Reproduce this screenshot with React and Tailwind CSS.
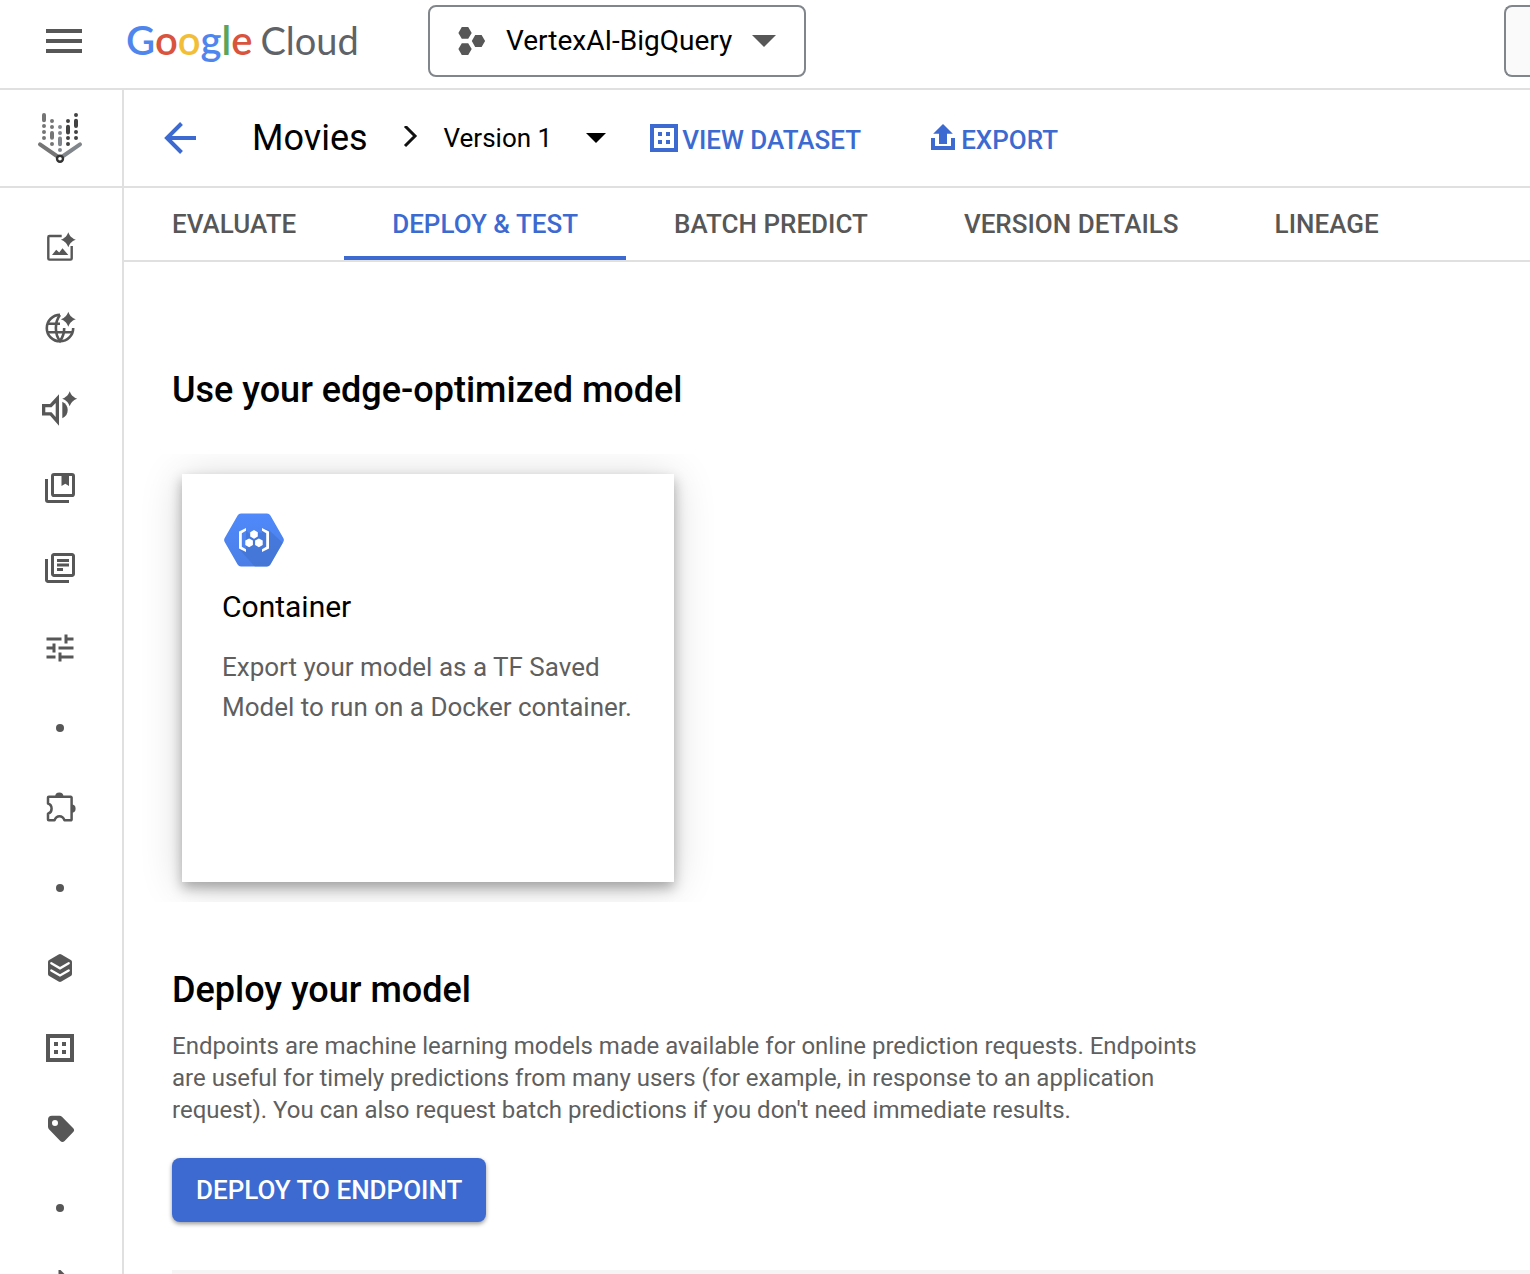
import { MdOutlineLibraryBooks, MdTune } from "react-icons/md";

function Sparkle({ x, y, r = 7 }) {
  return (
    <path
      transform={`translate(${x} ${y}) scale(${r / 7})`}
      fill="currentColor"
      d="M0-7.5C.9-4.700 2.200-3.200 3.600-2.200C4.500-1.300 5.500-.7 7.500 0C5.500.7 4.500 1.300 3.600 2.200C2.200 3.200.9 4.700 0 7.500C-.9 4.700-2.200 3.200-3.600 2.200C-4.500 1.300-5.500.7-7.500 0C-5.500-.7-4.500-1.300-3.600-2.200C-2.200-3.200-.9-4.700 0-7.500z"
    />
  );
}

function Icon({ children }) {
  return (
    <svg width="48" height="48" viewBox="0 0 48 48" fill="none" aria-hidden="true">
      {children}
    </svg>
  );
}

function VisionIcon() {
  return (
    <Icon>
      <path d="M25.700 12H13.500a1.200 1.200 0 0 0-1.200 1.200V34.400a1.200 1.200 0 0 0 1.200 1.200H34.500a1.200 1.200 0 0 0 1.200-1.200V22" stroke="currentColor" strokeWidth="2.400" />
      <path d="M16 31l4.200-5.300 3 2.900 3.300-4.300L32.300 31z" fill="currentColor" />
      <Sparkle x={32.3} y={15.7} />
    </Icon>
  );
}

function GlobeIcon() {
  return (
    <Icon>
      <g stroke="currentColor" strokeWidth="2.600">
        <path d="M24 10.900A13.200 13.200 0 1 0 37.200 24" />
        <path d="M11.500 19.800H24M11.500 28.200H36.500" />
        <path d="M24 11C18.500 18 18.500 30 24 37C27 33 28.300 29 28.200 24" />
      </g>
      <Sparkle x={32.3} y={15.3} />
    </Icon>
  );
}

function SpeechIcon() {
  return (
    <Icon>
      <path fillRule="evenodd" fill="currentColor" d="M6 20H14L23 10.300V41.700L14 31.500H6zM9.300 23.300V28.200H15.500L19.700 33V19L15.500 23.300z" />
      <path fill="currentColor" d="M26.300 17.700c3.600 1.500 5.400 4.800 5.400 8.300s-1.800 6.800-5.400 8.300z" />
      <Sparkle x={33.7} y={14.7} />
    </Icon>
  );
}

function CollectionIcon() {
  return (
    <Icon>
      <rect x="16.500" y="10.500" width="21" height="21" rx="1.600" stroke="currentColor" strokeWidth="3" />
      <path d="M25.500 10.500H33V22L29.300 19.800L25.500 22z" fill="currentColor" />
      <path d="M10.500 15V36a1.500 1.500 0 0 0 1.500 1.500H33" stroke="currentColor" strokeWidth="3" />
    </Icon>
  );
}

function PuzzleIcon() {
  return (
    <Icon>
      <path
        d="M12.800 12.800H34.800a.8.800 0 0 1 .8.800V35.500a.8.800 0 0 1-.8.800H28.500C27.500 33.700 25.500 32.300 23.500 32.300S19.500 33.700 18.500 36.300H12.800a.8.800 0 0 1-.8-.8V29.800C14.300 29 15.600 27 15.600 24.700S14.300 20.300 12 19.500V13.600a.8.800 0 0 1 .8-.8z"
        stroke="currentColor"
        strokeWidth="2.500"
        strokeLinejoin="round"
      />
      <path fill="currentColor" d="M19.200 12.500a4.100 4.100 0 0 1 8.200 0zM35.500 20.600a4.100 4.100 0 0 1 0 8.200z" />
    </Icon>
  );
}

function LayersIcon() {
  return (
    <Icon>
      <path fill="currentColor" d="M22.600 10.500a2.800 2.800 0 0 1 2.800 0L34.800 16a2.400 2.400 0 0 1 1.200 2.100V30a2.400 2.400 0 0 1-1.200 2.100L25.400 37.600a2.800 2.800 0 0 1-2.800 0L13.200 32.100A2.400 2.400 0 0 1 12 30V18.100A2.400 2.400 0 0 1 13.200 16z" />
      <path d="M15.300 19.200L24 24.300L32.700 19.200M15.300 26.400L24 31.500L32.700 26.400" stroke="#fff" strokeWidth="2.300" strokeLinecap="round" />
    </Icon>
  );
}

function DatasetGlyph() {
  return (
    <svg width="28" height="28" viewBox="0 0 28 28" fill="currentColor" aria-hidden="true">
      <path fillRule="evenodd" d="M0 0H28V28H0zM4 4V24H24V4z" />
      <path d="M8 8h4v4H8zM16 8h4v4h-4zM8 16h4v4H8zM16 16h4v4h-4z" />
    </svg>
  );
}

function TagIcon() {
  return (
    <Icon>
      <path fillRule="evenodd" fill="currentColor" d="M16 11.700H23.300a4 4 0 0 1 2.900 1.200L37 23.900a3 3 0 0 1 0 4.300L28.600 36.900a3 3 0 0 1-4.300 0L13.200 25.500A4 4 0 0 1 12 22.700V15.700a4 4 0 0 1 4-4zM19 16a3 3 0 1 0 0 6a3 3 0 1 0 0-6z" />
    </Icon>
  );
}

function Dot() {
  return <span className="size-2 rounded-full bg-[#575757]" />;
}

function RocketIcon() {
  return (
    <Icon>
      <path fill="currentColor" d="M24.500 6L29 10.500V20H38L34 30H29V40H19V30H14L10 20H22.500V6z" />
    </Icon>
  );
}

function VertexLogo() {
  return (
    <svg width="48" height="56" viewBox="0 0 48 56" fill="none" strokeWidth="4" strokeLinecap="round" aria-hidden="true">
      <path stroke="#757575" d="M8 5V10.300M8 16v.01M8 22v.01M8 28v.01M16 11v.01M16 17v.01M16 23V27.700M16 34v.01" />
      <path stroke="#80868b" d="M24 17v.01M24 23v.01M24 28.500V34.200M24 40v.01" />
      <path stroke="#424242" d="M32 11v.01M32 16.700V22.500M32 28v.01M32 34v.01M40 5v.01M40 10.700V16M40 22v.01M40 28v.01" />
      <path stroke="#757575" d="M4 34.300L23 47.500" />
      <path stroke="#80868b" d="M44 34.300L25 47.500" />
      <circle cx="24" cy="48.700" r="3" fill="#fff" stroke="#333" strokeWidth="2.400" />
    </svg>
  );
}

function ContainerLogo() {
  return (
    <svg className="block" width="60" height="54" viewBox="0 0 60 54" aria-hidden="true">
      <defs>
        <linearGradient id="hexFill" x1="0" y1="0" x2="0" y2="1">
          <stop offset="0" stopColor="#4f89fb" />
          <stop offset="1" stopColor="#4b7fe6" />
        </linearGradient>
        <clipPath id="hexClip">
          <path d="M17 .5H43a4 4 0 0 1 3.400 2L59.300 25a4 4 0 0 1 0 4L46.400 51.500a4 4 0 0 1-3.400 2H17a4 4 0 0 1-3.400-2L.7 29a4 4 0 0 1 0-4L13.600 2.500A4 4 0 0 1 17 .5z" />
        </clipPath>
      </defs>
      <g clipPath="url(#hexClip)">
        <rect width="60" height="54" fill="url(#hexFill)" />
        <path d="M15 36L33 56H60V31L45 17L38 15V20L33.500 19L29 25L22 17V36z" fill="#3f6fc9" opacity=".55" />
      </g>
      <path fill="#fff" d="M22 15V17.800L17.800 20.300V33.700L22 36.200V39L15 35.500V18.500zM38 15V17.800L42.200 20.300V33.700L38 36.200V39L45 35.500V18.500z" />
      <path fill="#fff" d="M30 17l3.800 2.200v4.400L30 25.800l-3.800-2.200v-4.400zM25.100 25.400l3.800 2.200V32l-3.800 2.200L21.300 32v-4.400zM34.900 25.400l3.800 2.200V32l-3.800 2.200L31.100 32v-4.400z" />
    </svg>
  );
}

const navItems = [
  ["Vision", <VisionIcon />],
  ["Language", <GlobeIcon />],
  ["Speech", <SpeechIcon />],
  ["Model Garden", <CollectionIcon />],
  ["Notebooks", <MdOutlineLibraryBooks size={36} />],
  ["Tuning", <MdTune size={36} />],
  ["Section one", <Dot />],
  ["Extensions", <PuzzleIcon />],
  ["Section two", <Dot />],
  ["Feature Store", <LayersIcon />],
  ["Datasets", <DatasetGlyph />],
  ["Labeling", <TagIcon />],
  ["Section three", <Dot />],
  ["Training", <RocketIcon />],
];

const tabs = ["EVALUATE", "DEPLOY & TEST", "BATCH PREDICT", "VERSION DETAILS", "LINEAGE"];

function TopBar() {
  return (
    <header className="flex h-[90px] shrink-0 items-start border-b-2 border-[#e0e0e0]">
      <button type="button" aria-label="Main menu" className="mt-[29px] ml-[46px] flex w-9 flex-col gap-1.5">
        <span className="h-1 w-full bg-[#575757]" />
        <span className="h-1 w-full bg-[#575757]" />
        <span className="h-1 w-full bg-[#575757]" />
      </button>
      <a href="#" className="ml-11 mt-4 flex w-[258px] items-baseline gap-2 whitespace-nowrap font-['Lato',sans-serif] leading-[48px]">
        <span className="text-[40px] font-semibold">
          <span className="text-[#4f86ee]">G</span>
          <span className="text-[#d9543d]">o</span>
          <span className="text-[#f2be3a]">o</span>
          <span className="text-[#4f86ee]">g</span>
          <span className="text-[#5aa55c]">l</span>
          <span className="text-[#d9543d]">e</span>
        </span>
        <span className="text-[38px] text-[#5f6368]">Cloud</span>
      </a>
      <button type="button" className="ml-11 mt-[5px] flex h-[72px] items-center rounded-lg border-2 border-[#80868b] px-7 text-[28px]">
        <svg width="28" height="28" viewBox="0 0 28 28" fill="#575757" aria-hidden="true">
          <path d="M3.800 0h6.400l3.500 5.900-3.500 5.900H3.800L.4 5.900zM3.800 16.200h6.400l3.500 5.900-3.500 5.900H3.800L.4 22.100zM17.200 8.100h6.400l3.500 5.900-3.500 5.900h-6.400L13.800 14z" />
        </svg>
        <span className="ml-5">VertexAI-BigQuery</span>
        <svg className="ml-5" width="24" height="12" viewBox="0 0 24 12" fill="#575757" aria-hidden="true">
          <path d="M0 0H24L12 12z" />
        </svg>
      </button>
      <button type="button" aria-label="Search" className="mt-[5px] ml-auto h-[72px] w-[26px] rounded-l-lg border-2 border-r-0 border-[#80868b] bg-[#fafafa]" />
    </header>
  );
}

function SideBar() {
  return (
    <aside className="w-[124px] shrink-0 border-r-2 border-[#e0e0e0] text-[#575757]">
      <div className="flex h-[98px] items-center border-b-2 border-[#e0e0e0] pl-9">
        <VertexLogo />
      </div>
      <nav aria-label="Vertex AI" className="flex flex-col pt-5">
        {navItems.map(([label, icon]) => (
          <a key={label} href="#" aria-label={label} className="flex h-20 w-[120px] items-center justify-center">
            {icon}
          </a>
        ))}
      </nav>
    </aside>
  );
}

function TitleBar() {
  return (
    <div className="flex h-[98px] items-center border-b-2 border-[#e0e0e0] pl-10">
      <button type="button" aria-label="Back" className="text-[#3c6ad1]">
        <svg width="32" height="32" viewBox="0 0 32 32" fill="none" stroke="currentColor" strokeWidth="4" aria-hidden="true">
          <path d="M32 16H3M17.500 1.500L3 16L17.500 30.500" />
        </svg>
      </button>
      <h1 className="ml-14 text-[36px]">Movies</h1>
      <svg className="ml-[34px] mr-[26px]" width="16" height="24" viewBox="0 0 16 24" fill="none" stroke="#111" strokeWidth="3" aria-hidden="true">
        <path d="M3 0L13 10L3 20" />
      </svg>
      <button type="button" className="flex items-center gap-[34px] text-[26px]">
        Version 1
        <svg width="20" height="10" viewBox="0 0 20 10" aria-hidden="true">
          <path d="M0 0H20L10 10z" />
        </svg>
      </button>
      <button type="button" className="ml-11 flex items-center gap-1 text-[26px] font-medium text-[#3c6ad1]">
        <DatasetGlyph />
        <span className="pt-1">VIEW DATASET</span>
      </button>
      <button type="button" className="ml-[70px] flex items-center gap-1.5 text-[26px] font-medium text-[#3c6ad1]">
        <svg width="24" height="28" viewBox="0 0 24 28" fill="currentColor" aria-hidden="true">
          <path d="M12 0L21.800 9.800H16V20H8V9.800H2.200z" />
          <path d="M0 14H4V22H20V14H24V26H0z" />
        </svg>
        <span className="pt-1">EXPORT</span>
      </button>
    </div>
  );
}

function Tabs() {
  return (
    <div role="tablist" className="flex h-[74px] border-b-2 border-[#e0e0e0] text-[26px] font-medium">
      {tabs.map((tab, i) => (
        <button
          key={tab}
          type="button"
          role="tab"
          aria-selected={i === 1}
          className={
            i === 1
              ? "whitespace-nowrap border-y-4 border-t-transparent border-b-[#3c6ad1] px-12 text-[#3c6ad1]"
              : "whitespace-nowrap border-y-4 border-transparent px-12 text-[#575757]"
          }
        >
          {tab}
        </button>
      ))}
    </div>
  );
}

export default function App() {
  return (
    <div className="flex h-screen flex-col overflow-hidden bg-white font-['Roboto',sans-serif] text-black">
      <TopBar />
      <div className="flex min-h-0 flex-1">
        <SideBar />
        <main className="min-w-0 flex-1">
          <TitleBar />
          <Tabs />
          <div className="pl-12 pt-26">
            <h2 className="text-[36px] leading-12 font-medium">Use your edge-optimized model</h2>
            <div className="mt-10 -ml-12 overflow-hidden py-5 pl-[58px]">
              <a
                href="#"
                className="block h-[408px] w-[492px] bg-white px-10 pt-[39px] shadow-[0_6px_12px_rgba(0,0,0,0.3),0_4px_40px_rgba(0,0,0,0.16)]"
              >
                <span className="block pl-0.5">
                  <ContainerLogo />
                </span>
                <h3 className="mt-4 text-[30px] leading-12">Container</h3>
                <p className="mt-4 text-[26px] leading-10 text-[#5f5f5f]">
                  Export your model as a TF Saved Model to run on a Docker container.
                </p>
              </a>
            </div>
            <h2 className="mt-16 text-[36px] leading-12 font-medium">Deploy your model</h2>
            <p className="mt-4 max-w-[1040px] text-[24px] leading-8 text-[#5f5f5f]">
              Endpoints are machine learning models made available for online prediction requests. Endpoints are
              useful for timely predictions from many users (for example, in response to an application request). You
              can also request batch predictions if you don't need immediate results.
            </p>
            <button
              type="button"
              className="mt-8 block h-16 rounded-lg bg-[#3c6ad1] px-6 text-[26px] font-medium text-white shadow-[0_2px_4px_rgba(0,0,0,0.4)]"
            >
              DEPLOY TO ENDPOINT
            </button>
            <div className="mt-12 h-12 bg-[#f5f5f5]" />
          </div>
        </main>
      </div>
    </div>
  );
}
